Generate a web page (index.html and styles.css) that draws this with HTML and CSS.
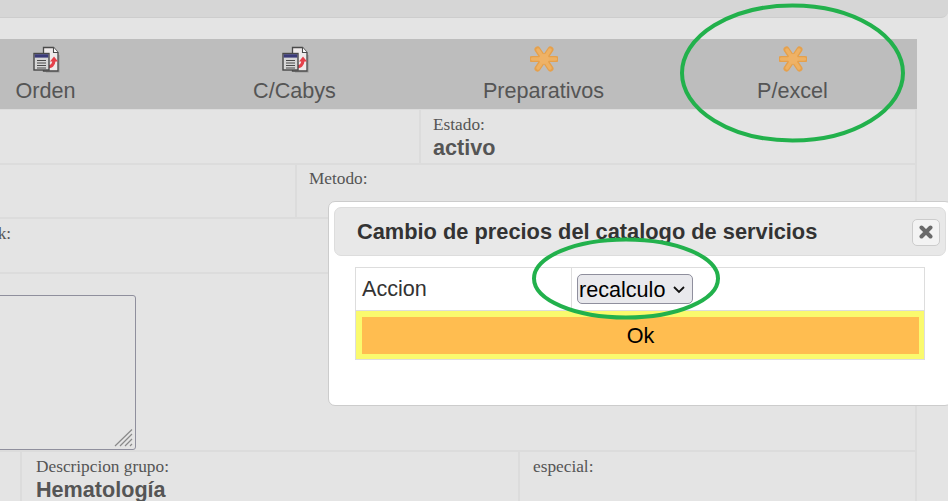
FILE: index.html
```html
<!DOCTYPE html>
<html lang="es">
<head>
    <meta charset="UTF-8">
    <meta name="viewport" content="width=device-width, initial-scale=1.0">
    <title>Catalogo de servicios</title>
    <link rel="stylesheet" href="styles.css">
</head>
<body>
    <div class="top-bar"></div>

    <div class="page">
        <div class="toolbar">
            <div class="tool">
                <svg class="tool-icon" width="28" height="28" viewBox="0 0 28 28"><use href="#doc-icon"/></svg>
                <span>Orden</span>
            </div>
            <div class="tool">
                <svg class="tool-icon" width="28" height="28" viewBox="0 0 28 28"><use href="#doc-icon"/></svg>
                <span>C/Cabys</span>
            </div>
            <div class="tool">
                <svg class="tool-icon" width="28" height="28" viewBox="0 0 28 28"><use href="#star-icon"/></svg>
                <span>Preparativos</span>
            </div>
            <div class="tool">
                <svg class="tool-icon" width="28" height="28" viewBox="0 0 28 28"><use href="#star-icon"/></svg>
                <span>P/excel</span>
            </div>
        </div>

        <div class="row row-1">
            <div class="cell"></div>
            <div class="cell">
                <div class="label">Estado:</div>
                <div class="value">activo</div>
            </div>
        </div>
        <div class="row row-2">
            <div class="cell"></div>
            <div class="cell">
                <div class="label">Metodo:</div>
            </div>
        </div>
        <div class="row row-3">
            <div class="cell">
                <div class="label">Stock:</div>
            </div>
        </div>
        <div class="row row-4">
            <div class="notes-box">
                <textarea class="notes"></textarea>
                <svg class="notes-grip" width="20" height="20" viewBox="0 0 20 20"><path d="M1 18L18 1.500M6 18L18 6M11 18l7-7M16 18l2-2"/></svg>
            </div>
        </div>
        <div class="row row-5">
            <div class="cell"></div>
            <div class="cell">
                <div class="label">Descripcion grupo:</div>
                <div class="value">Hematología</div>
            </div>
            <div class="cell">
                <div class="label">especial:</div>
            </div>
        </div>
    </div>

    <div class="dialog">
        <div class="dialog-title">
            <span>Cambio de precios del catalogo de servicios</span>
            <button class="dialog-close" type="button">
                <svg width="14" height="14" viewBox="0 0 14 14"><path d="M2.500 2.500l9 9M11.500 2.500l-9 9" stroke="#6a6a6a" stroke-width="4" stroke-linecap="round"/></svg>
            </button>
        </div>
        <table class="dialog-table">
            <tr>
                <td class="dialog-name">Accion</td>
                <td class="dialog-field">
                    <select class="dialog-select"><option>recalculo</option></select>
                </td>
            </tr>
            <tr>
                <td class="dialog-submit" colspan="2"><button class="ok-button" type="button">Ok</button></td>
            </tr>
        </table>
    </div>

    <!-- marcas verdes sobre la captura -->
    <svg class="marks" width="948" height="501" viewBox="0 0 948 501">
        <ellipse cx="792.5" cy="73" rx="110.5" ry="67.5"/>
        <ellipse cx="626" cy="278.5" rx="92" ry="39"/>
    </svg>

    <svg class="icon-defs" width="0" height="0">
        <defs>
            <g id="doc-icon">
                <path d="M27 10v17H14" fill="none" stroke="#9a9a9a" stroke-width="1.200"/>
                <path d="M11.500 2.500h10l4.500 5v18.500h-14.500z" fill="#eeeaea" stroke="#4a4a4a" stroke-width="1.300"/>
                <path d="M21.500 2.500v5h4.500" fill="#fff" stroke="#4a4a4a" stroke-width="1.100"/>
                <path d="M16 21.500c3 .5 5.500-1 6-6" fill="none" stroke="#e5404a" stroke-width="3.200"/>
                <path d="M18 16.500l4-5 4 5z" fill="#e5404a"/>
                <rect x="2" y="8.500" width="15" height="16.500" fill="#d6d6d6" stroke="#484848" stroke-width="1.400"/>
                <rect x="2.700" y="9.200" width="13.600" height="3.400" fill="#3a3a78"/>
                <path d="M5 15.500h9M5 18h9M5 20.500h9M5 23h9" stroke="#4a4a4a" stroke-width="1"/>
            </g>
            <g id="star-icon">
                <g fill="none" stroke-linecap="round">
                    <path d="M2 14h24M7.500 4.500l13 19M20.500 4.500l-13 19" stroke="#e5a04c" stroke-width="6"/>
                    <path d="M2.500 14h23M8 5l12 18M20 5L8 23" stroke="#eeb163" stroke-width="3.500"/>
                </g>
                <circle cx="14" cy="14" r="5" fill="#efb266"/>
            </g>
        </defs>
    </svg>
</body>
</html>
```

FILE: styles.css
```css
html, body {
    margin: 0;
    height: 100%;
    overflow: hidden;
}

body {
    background-color: #e4e4e4;
    font-family: "Liberation Sans", Arial, sans-serif;
    color: #555;
}

.top-bar {
    height: 17px;
    background-color: #d6d6d6;
    border-bottom: 1px solid #cdcdcd;
    border-bottom-right-radius: 7px;
}

/* la captura recorta la parte izquierda de la pagina */
.page {
    width: 996px;
    margin-left: -79px;
    padding-top: 21px;
}

.toolbar {
    display: grid;
    grid-template-columns: repeat(4, 249px);
    height: 70px;
    background-color: #bdbdbd;
}

.tool {
    display: flex;
    flex-direction: column;
    align-items: center;
    padding-top: 6px;
    font-size: 21.600px;
    line-height: 25px;
    color: #555;
}

.tool-icon {
    display: block;
    margin-bottom: 5px;
}

.row {
    display: grid;
    border-bottom: 2px solid #dcdcdc;
    border-right: 2px solid #dcdcdc;
}

.row-1 {
    grid-template-columns: 498px 1fr;
    height: 53px;
    border-top: 1px solid #dcdcdc;
}

.row-2 {
    grid-template-columns: 374px 1fr;
    height: 52px;
}

.row-3 {
    grid-template-columns: 1fr;
    height: 53px;
}

.row-4 {
    display: block;
    height: 155px;
    padding-top: 21px;
}

.row-5 {
    grid-template-columns: 99px 498px 1fr;
    height: 53px;
}

.cell {
    padding: 5px 0 0 13px;
}

.cell + .cell {
    border-left: 2px solid #dcdcdc;
}

.row-1 .cell,
.row-2 .cell {
    padding-left: 12px;
}

.row-2 .cell {
    padding-top: 4px;
}

.row-3 .cell {
    padding-left: 46px;
}

.row-5 .cell:nth-child(2) {
    padding-left: 14px;
}

.label {
    font-family: "Liberation Serif", "Times New Roman", serif;
    font-size: 17.300px;
    line-height: 20px;
    color: #555;
}

.value {
    font-size: 21.600px;
    font-weight: bold;
    line-height: 26px;
    color: #555;
}

.notes-box {
    position: relative;
    width: 215px;
    height: 155px;
}

.notes {
    display: block;
    box-sizing: border-box;
    width: 100%;
    height: 100%;
    margin: 0;
    resize: none;
    background-color: transparent;
    border: 1px solid #8f8f9d;
    border-radius: 3px;
}

.notes-grip {
    position: absolute;
    right: 2px;
    bottom: 2px;
}

.notes-grip path {
    fill: none;
    stroke: #8a8a8a;
    stroke-width: 1.200;
}

.dialog {
    position: absolute;
    left: 328px;
    top: 201px;
    width: 624px;
    height: 205px;
    box-sizing: border-box;
    padding: 5px 5px 0 5px;
    background-color: #fff;
    border: 1px solid #ccc;
    border-radius: 7px;
}

.dialog-title {
    display: flex;
    align-items: center;
    justify-content: space-between;
    height: 49px;
    box-sizing: border-box;
    padding: 0 5px 0 22px;
    background-color: #e8e8e8;
    border: 1px solid #ddd;
    border-radius: 7px;
    font-size: 21.800px;
    font-weight: bold;
    color: #333;
}

.dialog-close {
    display: flex;
    align-items: center;
    justify-content: center;
    width: 28px;
    height: 27px;
    padding: 0;
    margin-top: 1px;
    background-color: #f3f3f3;
    border: 1px solid #ccc;
    border-radius: 5px;
}

.dialog-table {
    width: 570px;
    margin: 11px 0 0 21px;
    border-collapse: collapse;
    font-size: 21.600px;
    color: #333;
}

.dialog-table td {
    border: 1px solid #ddd;
    padding: 0;
}

.dialog-table .dialog-name {
    width: 209px;
    height: 42px;
    padding-left: 6px;
}

.dialog-table .dialog-field {
    padding-left: 5px;
}

.dialog-select {
    display: block;
    appearance: none;
    box-sizing: border-box;
    width: 116px;
    height: 30px;
    padding: 0 0 0 1px;
    font-family: "Liberation Sans", Arial, sans-serif;
    font-size: 21.600px;
    color: #000;
    background-color: #e9e9ed;
    background-image: url("data:image/svg+xml,%3Csvg xmlns='http://www.w3.org/2000/svg' width='14' height='9'%3E%3Cpath d='M2 2l5 5 5-5' fill='none' stroke='%23111' stroke-width='1.800'/%3E%3C/svg%3E");
    background-repeat: no-repeat;
    background-position: right 6px center;
    border: 1px solid #8f8f9d;
    border-radius: 5px;
}

.dialog-table .dialog-submit {
    background-color: #fafa6e;
    padding: 6px 5px 5px 6px;
}

.ok-button {
    display: block;
    width: 100%;
    height: 37px;
    padding: 0;
    border: 0;
    background-color: #ffbd50;
    font-family: "Liberation Sans", Arial, sans-serif;
    font-size: 21.600px;
    color: #000;
}

.marks {
    position: absolute;
    left: 0;
    top: 0;
    pointer-events: none;
}

.marks ellipse {
    fill: none;
    stroke: #22b14c;
    stroke-width: 4;
}

.icon-defs {
    position: absolute;
}
```
